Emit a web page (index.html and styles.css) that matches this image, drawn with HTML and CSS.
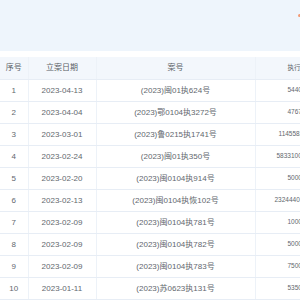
FILE: index.html
```html
<!DOCTYPE html>
<html lang="zh">
<head>
<meta charset="utf-8">
<link rel="stylesheet" href="styles.css">
</head>
<body>
<div class="page">
  <div class="topbar"><span class="dot"></span></div>
  <div class="spacer"></div>
  <div class="table-wrap">
    <table class="grid">
      <colgroup>
        <col class="c-no"><col class="c-date"><col class="c-case"><col class="c-amt">
      </colgroup>
      <thead>
        <tr><th>序号</th><th>立案日期</th><th>案号</th><th class="amt">执行标的</th></tr>
      </thead>
      <tbody>
        <tr><td>1</td><td>2023-04-13</td><td>(2023)闽01执624号</td><td class="amt">544000</td></tr>
        <tr><td>2</td><td>2023-04-04</td><td>(2023)鄂0104执3272号</td><td class="amt">476700</td></tr>
        <tr><td>3</td><td>2023-03-01</td><td>(2023)鲁0215执1741号</td><td class="amt long">1145582</td></tr>
        <tr><td>4</td><td>2023-02-24</td><td>(2023)闽01执350号</td><td class="amt longer">5833100</td></tr>
        <tr><td>5</td><td>2023-02-20</td><td>(2023)闽0104执914号</td><td class="amt">50000</td></tr>
        <tr><td>6</td><td>2023-02-13</td><td>(2023)闽0104执恢102号</td><td class="amt longest">2324440</td></tr>
        <tr><td>7</td><td>2023-02-09</td><td>(2023)闽0104执781号</td><td class="amt">10000</td></tr>
        <tr><td>8</td><td>2023-02-09</td><td>(2023)闽0104执782号</td><td class="amt">5000</td></tr>
        <tr><td>9</td><td>2023-02-09</td><td>(2023)闽0104执783号</td><td class="amt">7500</td></tr>
        <tr><td>10</td><td>2023-01-11</td><td>(2023)苏0623执131号</td><td class="amt">5350</td></tr>
      </tbody>
    </table>
  </div>
</div>
</body>
</html>
```
FILE: styles.css
```css
html, body {
  margin: 0;
  padding: 0;
  background: #ffffff;
}
.page {
  width: 300px;
  height: 300px;
  overflow: hidden;
  position: relative;
  font-family: "Liberation Sans", "Noto Sans CJK SC", sans-serif;
  font-size: 8px;
  color: #62676e;
}
.topbar {
  height: 51px;
  background: #eef5fc;
}
.dot {
  position: absolute;
  left: 298px;
  top: 14px;
  width: 3px;
  height: 3px;
  border-radius: 50%;
  background: #f29b76;
}
.spacer {
  height: 6px;
  background: #ffffff;
}
.table-wrap {
  width: 300px;
  overflow: hidden;
}
.grid {
  border-collapse: collapse;
  table-layout: fixed;
  width: 360px;
}
.c-no { width: 28px; }
.c-date { width: 68px; }
.c-case { width: 159px; }
.c-amt { width: 105px; }
.grid th,
.grid td {
  padding: 0;
  text-align: center;
  white-space: nowrap;
  border-left: 1px solid #edf2f8;
  border-bottom: 1px solid #e7edf5;
  line-height: 1;
}
.grid th:first-child,
.grid td:first-child {
  border-left: none;
}
.grid th {
  height: 22px;
  background: #f3f7fc;
  font-weight: normal;
  color: #5a5f66;
}
.grid td {
  height: 21px;
}
.grid .amt {
  text-align: left;
  padding-left: 32px;
  font-size: 6.5px;
}
.grid td.long {
  padding-left: 23px;
}
.grid td.longer {
  padding-left: 21px;
}
.grid td.longest {
  padding-left: 19px;
}
```
